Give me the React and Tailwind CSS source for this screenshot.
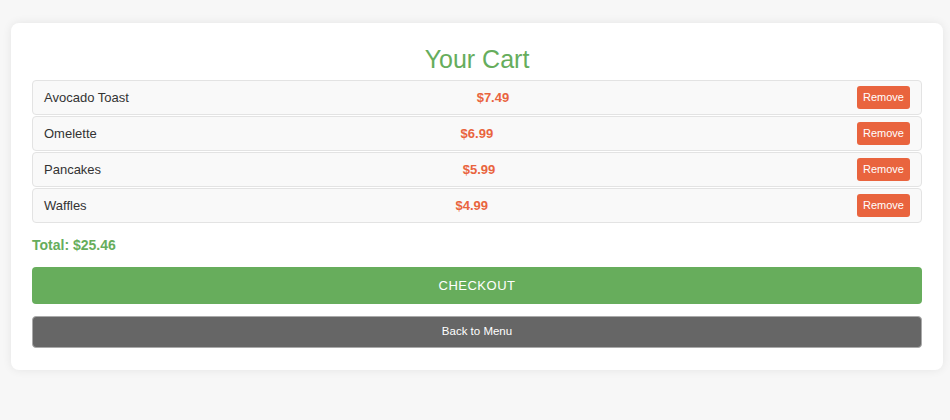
import { useState } from "react"

const initialItems = [
  { id: 1, name: "Avocado Toast", price: 7.49 },
  { id: 2, name: "Omelette", price: 6.99 },
  { id: 3, name: "Pancakes", price: 5.99 },
  { id: 4, name: "Waffles", price: 4.99 },
]

export default function App() {
  const [items, setItems] = useState(initialItems)

  const total = items.reduce((sum, item) => sum + item.price, 0)

  const removeItem = (id) => {
    setItems((prev) => prev.filter((item) => item.id !== id))
  }

  return (
    <main
      className="min-h-screen bg-[#f7f7f7] pt-[23px]"
      style={{ fontFamily: '"Liberation Sans", Arial, sans-serif' }}
    >
      <div className="ml-[11px] w-[932px] rounded-lg bg-white px-[21px] pb-[22px] pt-[22px] shadow-[0_0_10px_rgba(0,0,0,0.08)]">
        <h2 className="mb-[6px] text-center text-[25px] leading-[29px] text-[#66ad5c]">
          Your Cart
        </h2>

        <div className="flex flex-col gap-[1px]">
          {items.map((item) => (
            <div
              key={item.id}
              className="flex h-[35px] items-center justify-between rounded-[4px] border border-[#e3e3e3] bg-[#f9f9f9] px-[11px]"
            >
              <span className="text-[13px] text-[#333]">{item.name}</span>
              <span className="text-[13px] font-bold text-[#e9643e]">
                ${item.price.toFixed(2)}
              </span>
              <button
                onClick={() => removeItem(item.id)}
                className="h-[23px] rounded-[3px] bg-[#e9643e] px-[6px] text-[11px] text-white"
              >
                Remove
              </button>
            </div>
          ))}
        </div>

        <p className="mt-[12px] text-[14px] font-bold leading-[20px] text-[#66ad5c]">
          Total: ${total.toFixed(2)}
        </p>

        <button className="mt-[12px] block h-[37px] w-full rounded-[4px] bg-[#67ad5c] text-[13px] uppercase tracking-[0.5px] text-white">
          Checkout
        </button>

        <button className="mt-[12px] block h-[32px] w-full rounded-[4px] border border-[#aaa] bg-[#666] text-[11.5px] text-white">
          Back to Menu
        </button>
      </div>
    </main>
  )
}
